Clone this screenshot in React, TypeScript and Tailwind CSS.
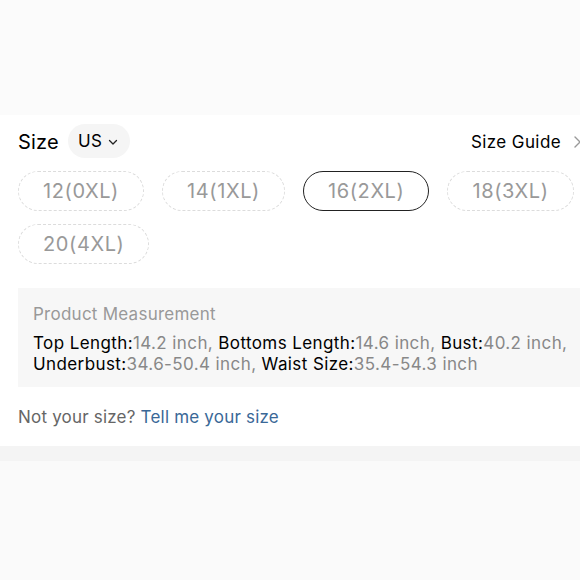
import React from "react";

const sizes = ["12(0XL)", "14(1XL)", "16(2XL)", "18(3XL)", "20(4XL)"];

export default function App() {
  return (
    <div
      className="w-[580px] h-[580px] overflow-hidden bg-[#fbfbfb] flex flex-col"
      style={{ fontFamily: "Inter, 'Noto Sans', sans-serif" }}
    >
      <div className="h-[115px] shrink-0 bg-[#fbfbfb]" />
      <div className="bg-white shrink-0 h-[331px] pl-[18px] pt-[9px]">
        <div className="flex items-center justify-between h-[34px] -mr-[5px]">
          <div className="flex items-center">
            <span className="text-[20px] text-black leading-none tracking-[0.2px] mt-[2px]">Size</span>
            <div className="ml-[9px] h-[34px] pl-[10px] pr-[11px] rounded-full bg-[#f5f5f5] flex items-center gap-[5px]">
              <span className="text-[17px] text-black leading-none tracking-[0.4px] mt-[1px]">US</span>
              <svg width="12" height="12" viewBox="0 0 12 12" fill="none" className="mt-[1px]">
                <path d="M2.5 4.5 L6 8 L9.5 4.5" stroke="#222" strokeWidth="1.3" strokeLinecap="round" strokeLinejoin="round" />
              </svg>
            </div>
          </div>
          <div className="flex items-center gap-[10px] mt-[2px]">
            <span className="text-[17px] text-black leading-none tracking-[0.4px]">Size Guide</span>
            <svg width="14" height="14" viewBox="0 0 14 14" fill="none">
              <path d="M4 2 L9 7 L4 12" stroke="#999" strokeWidth="1.4" strokeLinecap="round" strokeLinejoin="round" />
            </svg>
          </div>
        </div>
        <div className="flex flex-wrap gap-x-[18px] gap-y-[13px] mt-[13px] w-[600px]">
          {sizes.map((s, i) => (
            <div
              key={s}
              className={
                i === 2
                  ? "h-[40px] px-[24px] rounded-full border-[1.5px] border-solid border-[#222] flex items-center text-[20px] text-[#999] leading-none tracking-[0.6px]"
                  : "h-[40px] px-[24px] rounded-full border-[1.5px] border-dashed border-[#dcdcdc] flex items-center text-[20px] text-[#999] leading-none tracking-[0.6px]"
              }
            >
              {s}
            </div>
          ))}
        </div>
        <div className="mt-[24px] bg-[#f7f7f7] h-[99px] pl-[15px] pt-[16px]">
          <div className="text-[17px] text-[#999] leading-[20px] tracking-[0.25px]">Product Measurement</div>
          <div className="mt-[9px] text-[17px] leading-[21px] text-[#888] w-[570px] tracking-[0.4px]">
            <span className="text-black">Top Length:</span>14.2 inch, <span className="text-black">Bottoms Length:</span>14.6 inch, <span className="text-black">Bust:</span>40.2 inch,
            <br />
            <span className="text-black">Underbust:</span>34.6-50.4 inch, <span className="text-black">Waist Size:</span>35.4-54.3 inch
          </div>
        </div>
        <div className="mt-[20px] text-[17px] leading-[20px] tracking-[0.2px]">
          <span className="text-[#666]">Not your size? </span>
          <span className="text-[#3a6897]">Tell me your size</span>
        </div>
      </div>
      <div className="h-[15px] shrink-0 bg-[#f4f4f4]" />
      <div className="flex-1 bg-[#fafafa]" />
    </div>
  );
}
